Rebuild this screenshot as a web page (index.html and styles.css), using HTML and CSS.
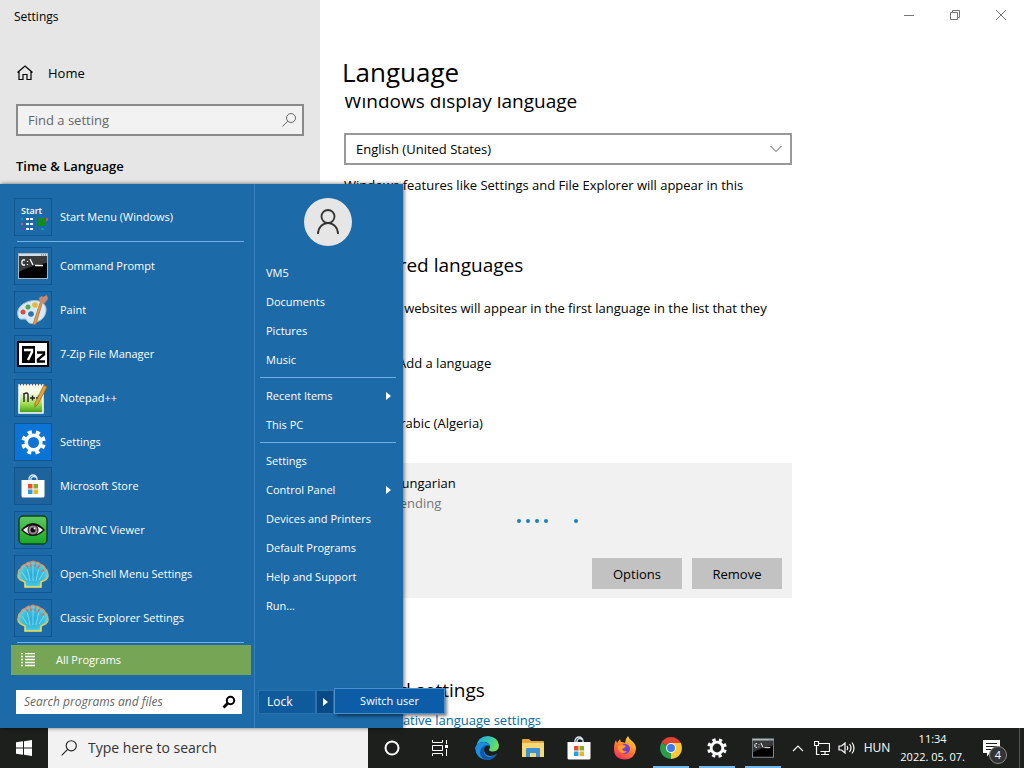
FILE: index.html
```html
<!DOCTYPE html>
<html lang="en">
<head>
  <meta charset="UTF-8">
  <meta name="viewport" content="width=device-width, initial-scale=1.0">
  <title>Settings</title>
  <link rel="stylesheet" href="styles.css">
</head>
<body>

  <!-- Shared icons -->
  <svg class="sprite" aria-hidden="true">
    <defs>
      <radialGradient id="shellFill" cx="0.5" cy="0.55" r="0.6">
        <stop offset="0" stop-color="#27a9dc"/>
        <stop offset="0.6" stop-color="#3fc0dc"/>
        <stop offset="1" stop-color="#7fe6e4"/>
      </radialGradient>
      <linearGradient id="shellEdge" x1="0" y1="0" x2="0" y2="1">
        <stop offset="0" stop-color="#d98468"/>
        <stop offset="0.5" stop-color="#c9b36a"/>
        <stop offset="1" stop-color="#f2e25a"/>
      </linearGradient>
      <linearGradient id="edgeTop" x1="0" y1="0" x2="1" y2="0.3">
        <stop offset="0" stop-color="#22a7e0"/>
        <stop offset="0.6" stop-color="#35c7b4"/>
        <stop offset="1" stop-color="#6fdc5c"/>
      </linearGradient>
      <linearGradient id="foxBody" x1="0.8" y1="0" x2="0.2" y2="1">
        <stop offset="0" stop-color="#ffd93b"/>
        <stop offset="0.45" stop-color="#ff8a2a"/>
        <stop offset="1" stop-color="#f52a63"/>
      </linearGradient>
      <linearGradient id="noteFill" x1="0" y1="0" x2="0" y2="1">
        <stop offset="0.3" stop-color="#f4fbe6"/>
        <stop offset="0.7" stop-color="#9bd84a"/>
        <stop offset="1" stop-color="#3c9a1c"/>
      </linearGradient>
      <linearGradient id="vncFill" x1="0" y1="0" x2="0" y2="1">
        <stop offset="0" stop-color="#5fc85f"/>
        <stop offset="1" stop-color="#18a827"/>
      </linearGradient>
    </defs>
    <symbol id="cog" viewBox="0 0 24 24">
      <circle cx="12" cy="12" r="7" fill="none" stroke="#fff" stroke-width="3.400"/>
      <circle cx="12" cy="12" r="10" fill="none" stroke="#fff" stroke-width="3.600" stroke-dasharray="3.900 3.954" stroke-dashoffset="-2"/>
    </symbol>
    <symbol id="cmd" viewBox="0 0 30 26">
      <rect x="0.5" y="0.5" width="29" height="25" fill="#000" stroke="#a9b4bb"/>
      <path d="M1 1h28v2H1z" fill="#d5dee3"/>
      <path d="M23 2h1M25 2h1M27 2h1" stroke="#2d5fae"/>
      <path d="M1 3h28v7Q14 12 1 19z" fill="#3a3a3a"/>
      <path d="M7 7H5L4 8v3l1 1h2M9.500 8v1M9.500 11v1M12 6l3 6M17 12.500h8" fill="none" stroke="#fff" stroke-width="1.300"/>
    </symbol>
    <symbol id="store" viewBox="0 0 24 24">
      <path d="M8 6V5a4 4 0 0 1 8 0v1M10 6V4.500a3 3 0 0 1 5-1" fill="none" stroke="#d8ecfa" stroke-width="1.300"/>
      <path d="M0.500 6h23v16q0 1.500-1.500 1.500H2Q0.500 23.500 0.500 22z" fill="#fff"/>
      <path d="M7 10h4.500v4.500H7z" fill="#e5502b"/>
      <path d="M12.500 10H17v4.500h-4.500z" fill="#7fae2c"/>
      <path d="M7 15.500h4.500V20H7z" fill="#2a9fd8"/>
      <path d="M12.500 15.500H17V20h-4.500z" fill="#f0b323"/>
    </symbol>
    <symbol id="shell" viewBox="0 0 32 30">
      <path d="M8 28v-5L3 20.500Q0 18 1.500 14.500 1 11.500 4 9.500 5 6 8.500 5.500 10.500 2.500 13.500 3.500 16 1 18.500 3.500q3-1 5 2Q27 6 28 9.500q3 2 2.500 5 1.500 3.500-1.500 6L24 23v5z" fill="url(#shellFill)" stroke="url(#shellEdge)" stroke-width="1.600"/>
      <path d="M16 22V7M13 22L10 8M19 22l3-14M10 21L5 13M22 21l5-8" stroke="#a5eef0" stroke-width="0.900" opacity="0.700"/>
      <path d="M9.500 6l1.500 3.500M13.500 4.500L14 8M18.500 4.500L18 8M22.500 6L21 9.500M27 10.500L24.500 12.500" stroke="#de6a5a" stroke-width="1.500"/>
    </symbol>
    <symbol id="lens" viewBox="0 0 16 16">
      <circle cx="10" cy="6" r="4.500" fill="none" stroke="currentColor"/>
      <path d="M6.800 9.200L1.500 14.500" stroke="currentColor"/>
    </symbol>
  </svg>

  <!-- Settings window -->
  <div class="window">
    <aside class="sidebar">
      <div class="window-name">Settings</div>
      <a class="home" href="#">
        <svg width="18" height="18" viewBox="0 0 18 18" fill="none" stroke="#000" stroke-width="1.200"><path d="M1.500 8.500L9 2l7.500 6.500M3 7.500v8h4v-5h4v5h4v-8"/></svg>
        Home
      </a>
      <div class="find">
        <input type="text" placeholder="Find a setting" aria-label="Find a setting">
        <svg width="16" height="16"><use href="#lens"/></svg>
      </div>
      <h3>Time &amp; Language</h3>
    </aside>

    <main>
      <div class="window-buttons">
        <button type="button" aria-label="Minimize"><svg width="12" height="12" viewBox="0 0 12 12"><path d="M1 6.500h10"/></svg></button>
        <button type="button" aria-label="Restore"><svg width="12" height="12" viewBox="0 0 12 12"><path d="M1.500 3.500h7v7h-7zM3.500 3V1.500h7v7H9"/></svg></button>
        <button type="button" aria-label="Close"><svg width="12" height="12" viewBox="0 0 12 12"><path d="M1 1l10 10M11 1L1 11"/></svg></button>
      </div>
      <h1>Language</h1>

      <div class="page">
        <h2>Windows display language</h2>
        <div class="select">
          <select aria-label="Windows display language">
            <option>English (United States)</option>
          </select>
          <svg width="12" height="8" viewBox="0 0 12 8" fill="none" stroke="#555"><path d="M0.500 1L6 6.500 11.500 1"/></svg>
        </div>
        <p>Windows features like Settings and File Explorer will appear in this language.</p>

        <h2 class="preferred">Preferred languages</h2>
        <p>Apps and websites will appear in the first language in the list that they support.</p>
        <a class="language-row add" href="#">Add a language</a>
        <div class="language-row arabic">Arabic (Algeria)</div>

        <div class="card">
          <div class="card-name">Hungarian</div>
          <div class="pending">Pending</div>
          <div class="dots"><i></i><i></i><i></i><i></i><i class="late"></i></div>
          <div class="card-buttons">
            <button type="button">Options</button>
            <button type="button">Remove</button>
          </div>
        </div>

        <h2 class="related">Related settings</h2>
        <a class="link" href="#">Administrative language settings</a>
      </div>
    </main>
  </div>

  <!-- Start menu -->
  <div class="start-menu">
    <div class="programs">
      <a class="program" href="#">
        <span class="icon"><svg width="32" height="32" viewBox="0 0 32 32">
          <text x="4" y="13" class="icon-start">Start</text>
          <path d="M9 18h8M9 23h7M9 28h8" stroke="#e8f4ff" stroke-width="2" stroke-dasharray="3 1"/>
          <path d="M20 17h8v8h-8z" fill="#0e8a1e"/>
          <path d="M4 22h2v2H4zM29 17h2v3h-2z" fill="#d84a6a"/>
          <path d="M4 17h2v2H4zM24 27h3v2h-3z" fill="#1596a8"/>
          <path d="M4 27h2v2H4z" fill="#7338b8"/>
        </svg></span>
        Start Menu (Windows)
      </a>
      <hr>
      <div class="program-list">
        <a class="program" href="#"><span class="icon"><svg width="30" height="26"><use href="#cmd"/></svg></span>Command Prompt</a>
        <a class="program" href="#"><span class="icon"><svg width="32" height="32" viewBox="0 0 32 32">
          <path d="M1 22Q-1 15 6 10 14 5 22 7q8 3 7 10-1 8-9 11-6 3-9 0-2-4-5-3-4 1-5-3z" fill="#d7e9f4" stroke="#9dbdd0"/>
          <circle cx="6" cy="18" r="2.500" fill="#dd4b39"/>
          <circle cx="11" cy="13" r="2.500" fill="#53a550"/>
          <circle cx="18" cy="11" r="2.800" fill="#e9b638"/>
          <circle cx="14" cy="20" r="2.800" fill="#2874b2"/>
          <path d="M25 10L19 30l-3 1 1-4 6-18z" fill="#e09a4a" stroke="#a8642a" stroke-width="0.600"/>
          <path d="M23 9l-1-5 3-2 1 1 4-2 1 4-4 5z" fill="#c98970"/>
        </svg></span>Paint</a>
        <a class="program" href="#"><span class="icon"><svg width="32" height="26" viewBox="0 0 32 26">
          <path d="M0 0h32v26H0z" fill="#000"/>
          <path d="M2 2h28v22H2z" fill="#fff"/>
          <path d="M5 5h13v17H5z" fill="#000"/>
          <path d="M7 9h8v2l-4 8" fill="none" stroke="#fff" stroke-width="2.400"/>
          <path d="M20 11.500h7v2l-6 5v2h7" fill="none" stroke="#000" stroke-width="2.400"/>
        </svg></span>7-Zip File Manager</a>
        <a class="program" href="#"><span class="icon"><svg width="32" height="32" viewBox="0 0 32 32">
          <path d="M2 3h24v28H2z" fill="url(#noteFill)" stroke="#fff" stroke-width="1.500"/>
          <path d="M3 2.500h22" stroke="#555" stroke-width="2" stroke-dasharray="1 2"/>
          <path d="M7 20v-9M7 12q3-2 4 0v8M13 16h5M15.500 13.500v5M19 16h5M21.500 13.500v5" fill="none" stroke="#222" stroke-width="1.400"/>
          <path d="M27 3l3 2-9 17-3 3v-4z" fill="#e5a437" stroke="#8f5d13" stroke-width="0.700"/>
        </svg></span>Notepad++</a>
        <a class="program" href="#"><span class="icon icon-blue"><svg width="25" height="25"><use href="#cog"/></svg></span>Settings</a>
        <a class="program" href="#"><span class="icon icon-store"><svg width="24" height="24"><use href="#store"/></svg></span>Microsoft Store</a>
        <a class="program" href="#"><span class="icon"><svg width="30" height="30" viewBox="0 0 30 30">
          <rect x="1" y="1" width="28" height="28" rx="4" fill="url(#vncFill)" stroke="#12401c" stroke-width="1.500"/>
          <path d="M3 15Q15 1 27 15 15 27 3 15z" fill="#111"/>
          <path d="M5 15q10-9 20 0-10 9-20 0z" fill="#f2f2f2"/>
          <circle cx="15" cy="15" r="5" fill="#9a8294" stroke="#1c1018"/>
          <circle cx="15" cy="15" r="2.500" fill="#140c10"/>
          <circle cx="16.500" cy="13.500" r="0.900" fill="#fff"/>
        </svg></span>UltraVNC Viewer</a>
        <a class="program" href="#"><span class="icon"><svg width="32" height="30"><use href="#shell"/></svg></span>Open-Shell Menu Settings</a>
        <a class="program" href="#"><span class="icon"><svg width="32" height="30"><use href="#shell"/></svg></span>Classic Explorer Settings</a>
      </div>
      <hr>
      <button type="button" class="all-programs">
        <svg width="14" height="14" viewBox="0 0 14 14" stroke="#fff"><path d="M0 .5h2M4 .5h10M0 3.500h2M4 3.500h10M0 6.500h2M4 6.500h10M0 9.500h2M4 9.500h10M0 12.500h2M4 12.500h10" stroke-width="1.400"/></svg>
        All Programs
      </button>
      <div class="menu-search">
        <input type="text" placeholder="Search programs and files" aria-label="Search programs and files">
        <svg width="14" height="14" viewBox="0 0 14 14" fill="none" stroke="#000"><circle cx="8.500" cy="5.500" r="3.700" stroke-width="2"/><path d="M6 8l-4.500 4.500" stroke-width="2.800"/></svg>
      </div>
    </div>

    <div class="places">
      <div class="avatar">
        <svg width="24" height="28" viewBox="0 0 24 28" fill="none" stroke="#333" stroke-width="1.800"><circle cx="12" cy="8.500" r="6.500"/><path d="M2 26a10 11 0 0 1 20 0"/></svg>
      </div>
      <a href="#">VM5</a>
      <a href="#">Documents</a>
      <a href="#">Pictures</a>
      <a href="#">Music</a>
      <hr>
      <a class="more" href="#">Recent Items</a>
      <a href="#">This PC</a>
      <hr>
      <a href="#">Settings</a>
      <a class="more" href="#">Control Panel</a>
      <a href="#">Devices and Printers</a>
      <a href="#">Default Programs</a>
      <a href="#">Help and Support</a>
      <a href="#">Run...</a>
      <div class="power">
        <button type="button" class="lock">Lock</button>
        <button type="button" class="power-more" aria-label="More options"></button>
        <button type="button" class="switch-user">Switch user</button>
      </div>
    </div>
  </div>

  <!-- Taskbar -->
  <footer class="taskbar">
    <button type="button" class="start" aria-label="Start"><svg width="16" height="16" viewBox="0 0 16 16" fill="#fff"><path d="M0 2.300L7 1.300v6.200H0zM8 1.200L16 0v7.500H8zM0 8.500h7v6.200l-7-1zM8 8.500h8V16l-8-1.200z"/></svg></button>
    <div class="taskbar-search">
      <svg width="18" height="18"><use href="#lens"/></svg>
      <input type="text" placeholder="Type here to search" aria-label="Type here to search">
    </div>
    <button type="button" class="wide" aria-label="Cortana"><svg width="16" height="16" viewBox="0 0 16 16"><circle cx="8" cy="8" r="6.500" fill="none" stroke="#fff" stroke-width="2"/></svg></button>
    <button type="button" class="wide" aria-label="Task View"><svg width="18" height="16" viewBox="0 0 18 16" fill="none" stroke="#fff"><path d="M1.500 0v2.500h10V0M1.500 5.500h10v5h-10zM1.500 16v-2.500h10V16M15.500 0v4M15.500 9v7"/><path d="M14 5h3v3h-3z" fill="#fff" stroke="none"/></svg></button>
    <button type="button" aria-label="Edge"><svg width="24" height="24" viewBox="0 0 24 24">
      <path d="M1 11Q3 0 13 0q10 1 11 9 0 6-6 6.500-4 0-4-2 1-1 1-3Q14 6 9 6 3 6 1 11z" fill="url(#edgeTop)"/>
      <path d="M0 12Q2 6 9 6q5 1 6 4-5-2-6 3 0 6 6 7 4 0 7-2-4 6-10 6Q1 23 0 12z" fill="#1b8ee0"/>
      <path d="M9 13q-1 4 2 7 4 3 11-2-4 6-10 6-6-1-7-7 0-5 4-7 3-2 6 0-5-1-6 3z" fill="#1256a6"/>
    </svg></button>
    <button type="button" aria-label="File Explorer"><svg width="22" height="20" viewBox="0 0 22 20">
      <path d="M0 2q0-1 1-1h6l2 2h12q1 0 1 1v14H0z" fill="#e3a73a"/>
      <path d="M0 5h22v14H0z" fill="#fbd877"/>
      <path d="M4 11q0-1 1-1h12q1 0 1 1v8h-4v-4H8v4H4z" fill="#3d92d6"/>
    </svg></button>
    <button type="button" aria-label="Microsoft Store"><svg width="24" height="24"><use href="#store"/></svg></button>
    <button type="button" aria-label="Firefox"><svg width="24" height="24" viewBox="0 0 24 24">
      <path d="M3 4l1 3 3-4 1 3q3 0 4 1 0-4 3-7 1 3 4 5 4 3 4 8-1 10-11 10.500Q1 23 1 13 1 7 3 4z" fill="url(#foxBody)"/>
      <circle cx="12" cy="13" r="5" fill="#7a3fd0"/>
      <path d="M5 10q4-2 8 0-1 2-4 3 1 3 5 2-3 4-7 1-3-3-2-6z" fill="#ff9a2c"/>
    </svg></button>
    <button type="button" class="running" aria-label="Chrome"><svg width="22" height="22" viewBox="0 0 22 22">
      <path d="M11 11L1.500 5.500A11 11 0 0 1 20.500 5.500z" fill="#e34133"/>
      <path d="M11 11L20.500 5.500A11 11 0 0 1 11 22z" fill="#fcc934"/>
      <path d="M11 11v11A11 11 0 0 1 1.500 5.500z" fill="#2a9d49"/>
      <path d="M11 6h9.800L11 22l4.300-8.500z" fill="#fcc934"/>
      <circle cx="11" cy="11" r="5" fill="#fff"/>
      <circle cx="11" cy="11" r="4" fill="#3b7ded"/>
    </svg></button>
    <button type="button" class="running" aria-label="Settings"><svg width="20" height="20"><use href="#cog"/></svg></button>
    <button type="button" class="running" aria-label="Command Prompt"><svg width="22" height="20"><use href="#cmd"/></svg></button>

    <div class="tray">
      <svg class="chevron" width="12" height="8" viewBox="0 0 12 8"><path d="M1 7l5-5 5 5"/></svg>
      <svg width="16" height="16" viewBox="0 0 16 16"><path d="M4.500 3.500h11v8h-9M11 12v3M7 14.500h8M.5 1.500h4v4h-4zM2.500 6v8.500h3"/></svg>
      <svg width="18" height="16" viewBox="0 0 18 16"><path d="M1 6v4h2.500L7 13V3L3.500 6zM9 6q1.500 2 0 4M11.500 4q3 4 0 8M14 2.500q4 5.500 0 11"/></svg>
      <span class="keyboard">HUN</span>
      <div class="clock"><span>11:34</span><span>2022. 05. 07.</span></div>
      <button type="button" class="notices" aria-label="Notifications">
        <svg width="18" height="18" viewBox="0 0 18 18"><path d="M0 1h17v13H7l-3 3.500V14H0z" fill="#fff" stroke="none"/><path d="M3 4.500h11M3 7.500h11M3 10.500h7" stroke="#1c1f1c"/></svg>
        <span class="badge">4</span>
      </button>
    </div>
  </footer>

</body>
</html>
```

FILE: styles.css
```css
* {
  margin: 0;
  padding: 0;
  box-sizing: border-box;
}

body {
  font-family: "Segoe UI", "Open Sans", "Noto Sans", sans-serif;
  font-size: 13px;
  line-height: 20px;
  color: #000;
  background: #fff;
  display: grid;
  grid-template-rows: 1fr 40px;
  height: 100vh;
  overflow: hidden;
  position: relative;
}

a {
  color: inherit;
  text-decoration: none;
}

button, input, select {
  font: inherit;
  color: inherit;
  border: none;
  background: none;
}

input, select {
  outline: none;
  appearance: none;
  min-width: 0;
}

svg {
  flex: none;
}

.sprite {
  position: absolute;
  width: 0;
  height: 0;
}

/* Settings window */
.window {
  display: grid;
  grid-template-columns: 320px 1fr;
  min-height: 0;
}

.sidebar {
  background: #e6e6e6;
  padding: 7px 16px;
}

.window-name {
  font-size: 12px;
  margin-left: -2px;
}

.home {
  display: flex;
  align-items: center;
  gap: 14px;
  margin-top: 36px;
}

.find {
  display: flex;
  align-items: center;
  height: 32px;
  margin-top: 21px;
  padding: 0 5px 0 10px;
  border: 2px solid #8a8a8a;
  background: #f2f2f2;
  color: #666;
}

.find input {
  flex: 1;
}

::placeholder {
  color: #666;
  opacity: 1;
}

.sidebar h3 {
  font-size: 13px;
  font-weight: 600;
  margin-top: 20px;
}

main {
  display: flex;
  flex-direction: column;
  min-height: 0;
}

.window-buttons {
  display: flex;
  justify-content: flex-end;
  height: 32px;
}

.window-buttons button {
  width: 46px;
}

.window-buttons svg {
  fill: none;
  stroke: #777;
}

h1 {
  font-size: 26px;
  font-weight: 400;
  line-height: 32px;
  margin-top: 24px;
  padding-left: 22px;
}

.page {
  flex: 1;
  min-height: 0;
  overflow: hidden;
  margin-top: 9px;
  padding-left: 24px;
  max-width: 472px;
}

h2 {
  font-size: 19px;
  font-weight: 400;
  line-height: 28px;
}

.page h2:first-child {
  margin-top: -10px;
}

.select {
  display: flex;
  align-items: center;
  height: 32px;
  margin: 18px 0 10px;
  padding: 0 8px 0 10px;
  border: 2px solid #999;
}

.select select {
  flex: 1;
}

h2.preferred {
  margin: 36px 0 19px;
}

.language-row {
  display: block;
  padding-left: 48px;
}

.add {
  margin-top: 15px;
  padding-left: 54px;
}

.arabic {
  margin-top: 40px;
}

.card {
  margin-top: 30px;
  padding: 10px 10px 9px 48px;
  background: #f1f1f1;
}

.pending {
  color: #767676;
}

.dots {
  display: flex;
  gap: 5px;
  margin: 6px 0 35px 125px;
}

.dots i {
  width: 4px;
  height: 4px;
  border-radius: 50%;
  background: #1a7fc1;
}

.dots .late {
  margin-left: 21px;
}

.card-buttons {
  display: flex;
  justify-content: flex-end;
  gap: 10px;
}

.card-buttons button {
  width: 90px;
  height: 31px;
  background: #c2c2c2;
}

h2.related {
  margin: 78px 0 6px;
}

.link {
  color: #0067a8;
}

/* Start menu, lies over the window */
.start-menu {
  position: absolute;
  left: 0;
  bottom: 40px;
  z-index: 1;
  display: flex;
  color: #fff;
  background: #1c6aa7;
  font-size: 11px;
  box-shadow: 1px 0 4px rgba(0, 0, 0, 0.6);
}

.programs {
  width: 254px;
  padding: 14px 3px 14px 11px;
}

.program-list {
  display: flex;
  flex-direction: column;
  gap: 6px;
}

.program {
  display: flex;
  align-items: center;
  gap: 8px;
  margin-left: 3px;
}

.icon {
  display: flex;
  align-items: center;
  justify-content: center;
  width: 38px;
  height: 38px;
  border: 1px solid #0f5590;
}

.icon-blue {
  background: #0c74d6;
}

.icon-store {
  background: #1f639c;
}

.icon-start {
  font-size: 9px;
  font-weight: 600;
  fill: #fff;
}

.start-menu hr {
  border: none;
  height: 1px;
  background: #6fb0e6;
}

.programs hr {
  margin: 5px 7px 5px 6px;
}

.programs .program-list + hr {
  margin-bottom: 2px;
}

.all-programs {
  display: flex;
  align-items: center;
  gap: 21px;
  width: 100%;
  height: 30px;
  padding-left: 10px;
  background: #77a556;
}

.menu-search {
  display: flex;
  align-items: center;
  height: 24px;
  margin: 15px 9px 0 5px;
  padding: 0 6px 0 8px;
  background: #fff;
  font-size: 12px;
}

.menu-search input {
  flex: 1;
  font-style: italic;
}

.places {
  display: flex;
  flex-direction: column;
  width: 149px;
  padding: 14px 7px 14px 5px;
  border-left: 1px solid #3580bc;
}

.avatar {
  display: flex;
  align-items: center;
  justify-content: center;
  align-self: center;
  width: 48px;
  height: 48px;
  margin-bottom: 12px;
  border-radius: 50%;
  background: #e6e6e6;
}

.places a {
  display: flex;
  align-items: center;
  justify-content: space-between;
  height: 29px;
  padding: 0 5px 0 6px;
}

.more::after, .power-more::after {
  content: "";
  border: 4px solid transparent;
  border-left: 5px solid currentColor;
  border-right: none;
}

.places hr {
  margin: 3px 0;
}

.power {
  position: relative;
  display: flex;
  height: 24px;
  margin-top: auto;
  margin-left: -2px;
}

.power button {
  border: 1px solid #2a73ae;
  background: #0f5a9a;
}

.power .lock {
  width: 58px;
  padding-left: 8px;
  font-size: 12px;
  text-align: left;
}

.power .power-more {
  display: flex;
  align-items: center;
  justify-content: center;
  width: 18px;
  background: #084a86;
}

.power .switch-user {
  position: absolute;
  left: 76px;
  bottom: 0;
  width: 111px;
  height: 26px;
  background: #0a5da6;
  border-color: #4d90c9;
  box-shadow: 2px 2px 3px rgba(0, 0, 0, 0.5);
}

/* Taskbar */
.taskbar {
  display: flex;
  grid-row: 2;
  color: #fff;
  background: #1c1f1c;
}

.taskbar button {
  display: flex;
  align-items: center;
  justify-content: center;
  width: 46px;
}

.taskbar .start, .taskbar .wide {
  width: 48px;
}

.taskbar-search {
  display: flex;
  align-items: center;
  gap: 10px;
  width: 320px;
  padding: 0 12px;
  color: #222;
  background: #f2f2f2;
  font-size: 14px;
}

.taskbar-search input {
  flex: 1;
}

.taskbar-search ::placeholder {
  color: #333;
}

.taskbar .running {
  background: linear-gradient(#76b9ed, #76b9ed) center bottom / 36px 2px no-repeat;
}

.tray {
  display: flex;
  align-items: center;
  margin-left: auto;
  margin-right: 4px;
  border-right: 1px solid #555;
}

.tray svg {
  margin-right: 8px;
  fill: none;
  stroke: #fff;
  stroke-width: 1.2;
}

.tray .chevron {
  margin-right: 10px;
}

.keyboard {
  margin-right: 10px;
  font-size: 12px;
}

.clock {
  display: flex;
  flex-direction: column;
  align-items: center;
  font-size: 11px;
  line-height: 18px;
}

.taskbar .notices {
  position: relative;
  width: 54px;
  height: 40px;
}

.notices svg {
  margin: 0;
}

.badge {
  position: absolute;
  left: 24px;
  top: 18px;
  width: 18px;
  height: 18px;
  border: 1px solid #888;
  border-radius: 50%;
  background: #333;
  font-size: 11px;
  line-height: 16px;
}
```
